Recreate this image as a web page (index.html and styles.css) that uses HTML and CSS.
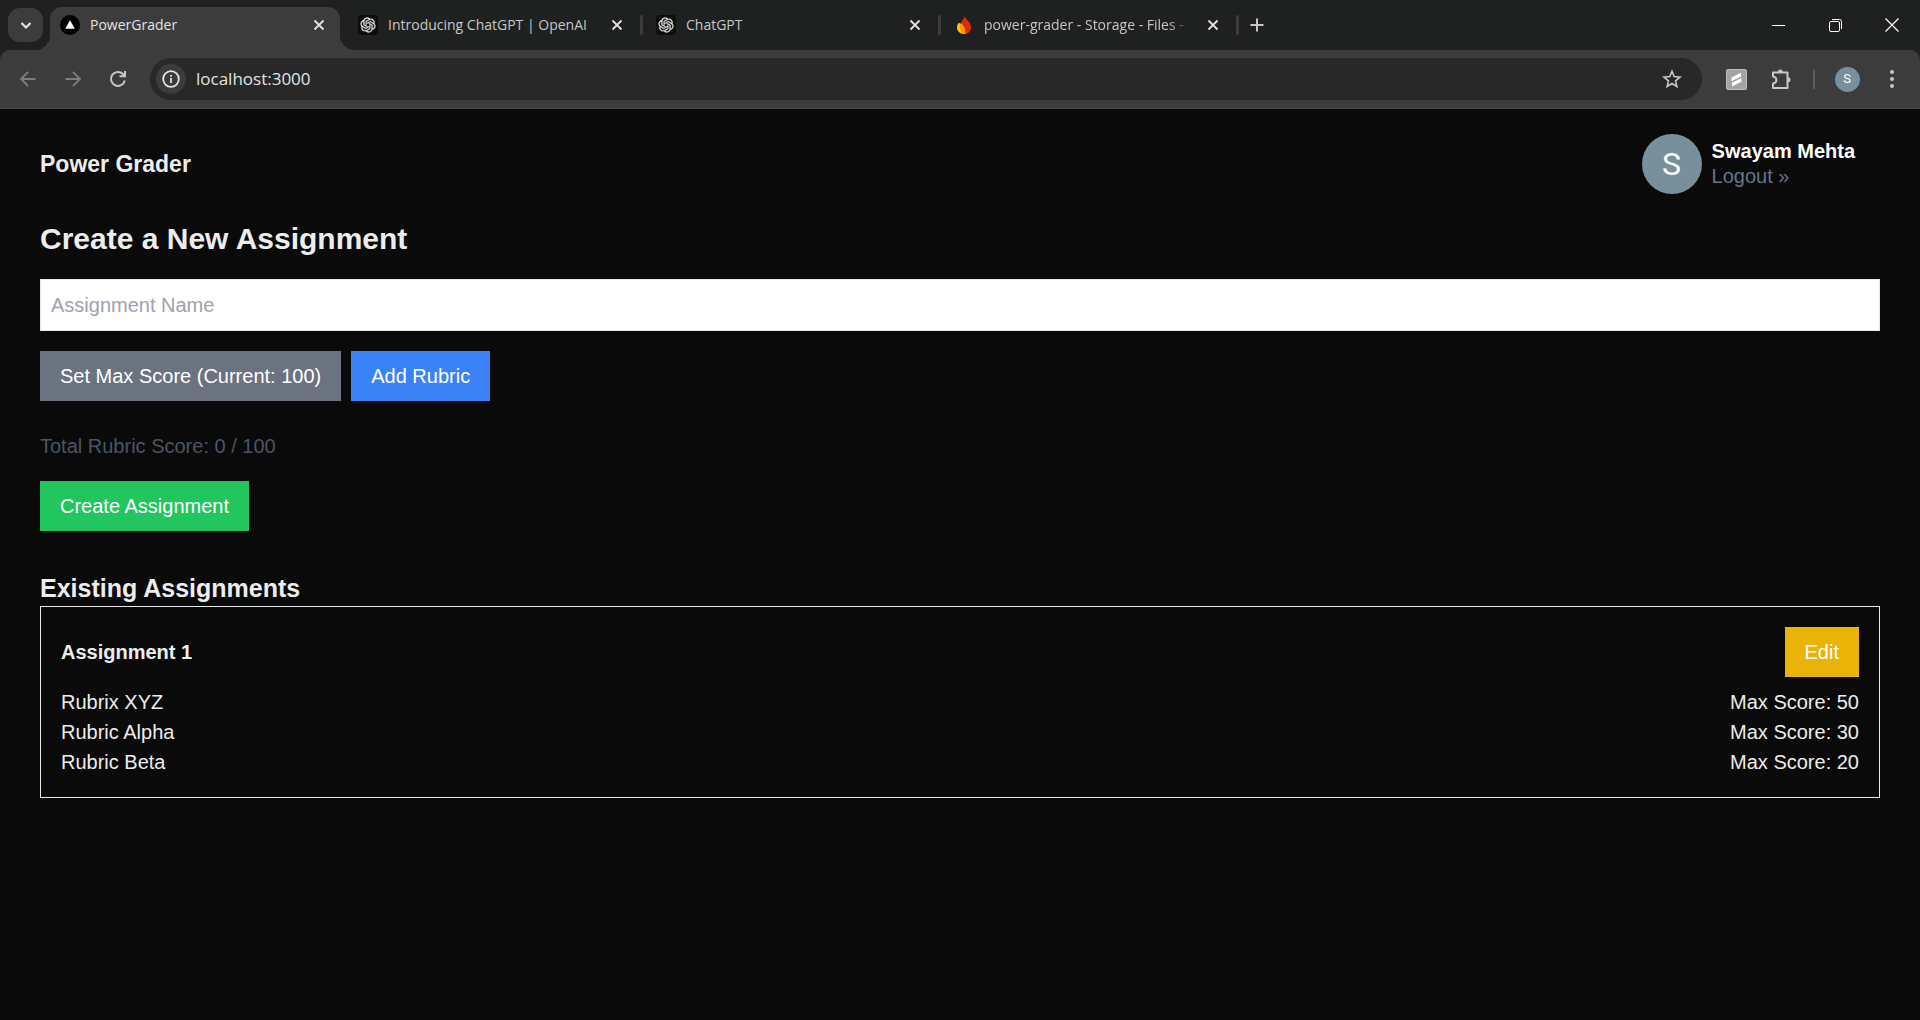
FILE: index.html
```html
<!DOCTYPE html>
<html lang="en">
<head>
    <meta charset="UTF-8">
    <meta name="viewport" content="width=device-width, initial-scale=1.0">
    <title>PowerGrader</title>
    <link rel="stylesheet" href="styles.css">
</head>
<body>
    <!-- Shared icons -->
    <svg class="icon-defs" aria-hidden="true">
        <symbol id="icon-close" viewBox="0 0 20 20">
            <path d="M5.5 5.5l9 9M14.5 5.5l-9 9" fill="none" stroke="currentColor" stroke-width="1.800"/>
        </symbol>
        <symbol id="icon-openai" viewBox="0 0 32 32">
            <rect width="32" height="32" rx="6" fill="#0c0c0c"/>
            <path transform="translate(4 4)" fill="#e8e8e8" stroke="#e8e8e8" stroke-width=".5" d="M22.2819 9.8211a5.9847 5.9847 0 0 0-.5157-4.9108 6.0462 6.0462 0 0 0-6.5098-2.9A6.0651 6.0651 0 0 0 4.9807 4.1818a5.9847 5.9847 0 0 0-3.9977 2.9 6.0462 6.0462 0 0 0 .7427 7.0966 5.98 5.98 0 0 0 .511 4.9107 6.051 6.051 0 0 0 6.5146 2.9001A5.9847 5.9847 0 0 0 13.2599 24a6.0557 6.0557 0 0 0 5.7718-4.2058 5.9894 5.9894 0 0 0 3.9977-2.9001 6.0557 6.0557 0 0 0-.7475-7.0729zm-9.022 12.6081a4.4755 4.4755 0 0 1-2.8764-1.0408l.1419-.0804 4.7783-2.7582a.7948.7948 0 0 0 .3927-.6813v-6.7369l2.02 1.1686a.071.071 0 0 1 .038.052v5.5826a4.504 4.504 0 0 1-4.4945 4.4944zm-9.6607-4.1254a4.4708 4.4708 0 0 1-.5346-3.0137l.142.0852 4.783 2.7582a.7712.7712 0 0 0 .7806 0l5.8428-3.3685v2.3324a.0804.0804 0 0 1-.0332.0615L9.74 19.9502a4.4992 4.4992 0 0 1-6.1408-1.6464zM2.3408 7.8956a4.485 4.485 0 0 1 2.3655-1.9728V11.6a.7664.7664 0 0 0 .3879.6765l5.8144 3.3543-2.0201 1.1685a.0757.0757 0 0 1-.071 0l-4.8303-2.7865A4.504 4.504 0 0 1 2.3408 7.872zm16.5963 3.8558L13.1038 8.364 15.1192 7.2a.0757.0757 0 0 1 .071 0l4.8303 2.7913a4.4944 4.4944 0 0 1-.6765 8.1042v-5.6772a.79.79 0 0 0-.407-.667zm2.0107-3.0231l-.142-.0852-4.7735-2.7818a.7759.7759 0 0 0-.7854 0L9.409 9.2297V6.8974a.0662.0662 0 0 1 .0284-.0615l4.8303-2.7866a4.4992 4.4992 0 0 1 6.6802 4.66zM8.3065 12.863l-2.02-1.1638a.0804.0804 0 0 1-.038-.0567V6.0742a4.4992 4.4992 0 0 1 7.3757-3.4537l-.142.0805L8.704 5.459a.7948.7948 0 0 0-.3927.6813zm1.0976-2.3654l2.602-1.4998 2.6069 1.4998v2.9994l-2.5974 1.4997-2.6067-1.4997Z"/>
        </symbol>
    </svg>

    <div class="browser">
        <div class="tab-strip">
            <button class="tab-search" aria-label="Search tabs">
                <svg width="20" height="20" viewBox="0 0 20 20"><path d="M5.5 8l4.500 4.500L14.500 8" fill="none" stroke="#e3e3e3" stroke-width="2.200"/></svg>
            </button>

            <div class="tab active">
                <button class="tab-label">
                    <svg width="20" height="20" viewBox="0 0 20 20"><circle cx="10" cy="10" r="10" fill="#000"/><path d="M10 5.200l4.800 8.600H5.200z" fill="#fff"/></svg>
                    <span class="tab-title">PowerGrader</span>
                </button>
                <button class="tab-close" aria-label="Close tab"><svg width="20" height="20"><use href="#icon-close"/></svg></button>
            </div>
            <span class="tab-divider hidden"></span>

            <div class="tab">
                <button class="tab-label">
                    <svg width="20" height="20"><use href="#icon-openai"/></svg>
                    <span class="tab-title">Introducing ChatGPT | OpenAI</span>
                </button>
                <button class="tab-close" aria-label="Close tab"><svg width="20" height="20"><use href="#icon-close"/></svg></button>
            </div>
            <span class="tab-divider"></span>

            <div class="tab">
                <button class="tab-label">
                    <svg width="20" height="20"><use href="#icon-openai"/></svg>
                    <span class="tab-title">ChatGPT</span>
                </button>
                <button class="tab-close" aria-label="Close tab"><svg width="20" height="20"><use href="#icon-close"/></svg></button>
            </div>
            <span class="tab-divider"></span>

            <div class="tab">
                <button class="tab-label">
                    <svg width="20" height="20" viewBox="0 0 20 20">
                        <path d="M10.500 1.500C12 4.500 17 7.500 17 12.500c0 4-3 6.500-6.500 6.500C7 18.500 5.500 15 6 11c.4-3.800 3-5.500 4.500-9.500z" fill="#dd2c00"/>
                        <path d="M4.500 8c3.500.3 7 3.200 6.800 10.800-4 .6-8.300-1.600-8.300-6.300 0-1.800.6-3.200 1.500-4.500z" fill="#ffc400"/>
                        <path d="M6.200 9c3 1.500 5.300 4.800 5.100 9.800C7.500 18.400 5.200 14.500 6.200 9z" fill="#ff9100"/>
                    </svg>
                    <span class="tab-title faded">power-grader - Storage - Files -</span>
                </button>
                <button class="tab-close" aria-label="Close tab"><svg width="20" height="20"><use href="#icon-close"/></svg></button>
            </div>
            <span class="tab-divider"></span>

            <button class="new-tab" aria-label="New tab">
                <svg width="20" height="20" viewBox="0 0 20 20"><path d="M10 3.500v13M3.500 10h13" fill="none" stroke="currentColor" stroke-width="2"/></svg>
            </button>

            <div class="window-controls">
                <button aria-label="Minimize"><svg width="14" height="14" viewBox="0 0 14 14"><path d="M1 7.500h13" stroke="#fff"/></svg></button>
                <button aria-label="Restore"><svg width="14" height="14" viewBox="0 0 14 14" fill="none" stroke="#fff"><rect x="1.500" y="3.500" width="10" height="10" rx="1.500"/><path d="M4 1.500h7.500a2 2 0 0 1 2 2V11"/></svg></button>
                <button aria-label="Close"><svg width="14" height="14" viewBox="0 0 14 14"><path d="M.5.5l13 13M13.500.5l-13 13" stroke="#fff" stroke-width="1.200"/></svg></button>
            </div>
        </div>

        <div class="toolbar">
            <button class="tool dim" aria-label="Back">
                <svg width="20" height="20" viewBox="0 0 20 20"><path d="M17.500 10H3.500M10 3L3 10l7 7" fill="none" stroke="currentColor" stroke-width="1.800"/></svg>
            </button>
            <button class="tool dim" aria-label="Forward">
                <svg width="20" height="20" viewBox="0 0 20 20"><path d="M2.500 10h14M10 3l7 7-7 7" fill="none" stroke="currentColor" stroke-width="1.800"/></svg>
            </button>
            <button class="tool" aria-label="Reload">
                <svg width="20" height="20" viewBox="0 0 20 20"><path d="M16.800 11.500A7 7 0 1 1 15 5l1.800 1.800M17 2v5.200h-5.500" fill="none" stroke="currentColor" stroke-width="2"/></svg>
            </button>

            <div class="address-bar">
                <button class="site-info" aria-label="View site information">
                    <svg width="18" height="18" viewBox="0 0 18 18"><circle cx="9" cy="9" r="7.800" fill="none" stroke="#e3e3e3" stroke-width="1.800"/><path d="M9 8v5M9 5v1.800" stroke="#e3e3e3" stroke-width="1.800"/></svg>
                </button>
                <input type="text" value="localhost:3000" aria-label="Address">
                <button class="bookmark" aria-label="Bookmark this tab">
                    <svg width="20" height="20" viewBox="0 0 20 20"><path d="M10 2.300l2.200 5.300 5.800.5-4.400 3.800 1.300 5.600-4.900-3-4.900 3 1.300-5.600L2 8.100l5.800-.5z" fill="none" stroke="currentColor" stroke-width="1.600"/></svg>
                </button>
            </div>

            <button class="tool" aria-label="Extension">
                <svg width="21" height="21" viewBox="0 0 21 21"><rect x=".5" y=".5" width="20" height="20" rx="1.500" fill="#a3a3a3" stroke="#bdbdbd"/><path d="M5.500 8.500l9.500-4.700v3.700l-9.500 4.700zM6 13.700l9.500-4.700v3.700L6 17.400z" fill="#fff"/></svg>
            </button>
            <button class="tool" aria-label="Extensions">
                <svg width="22" height="22" viewBox="0 0 22 22"><path d="M3 4.500h14.500v15.500H3v-4.500c4.500-.7 4.500-6.300 0-7z" fill="none" stroke="currentColor" stroke-width="2" stroke-linejoin="round"/><path d="M7.800 4a2.500 2.500 0 0 1 5 0zM18 9.300a2.500 2.500 0 0 1 0 5z" fill="currentColor"/></svg>
            </button>
            <span class="tool-divider"></span>
            <button class="tool" aria-label="Profile"><span class="avatar small">S</span></button>
            <button class="tool" aria-label="Menu">
                <svg width="20" height="20" viewBox="0 0 20 20" fill="currentColor"><circle cx="10" cy="3" r="2"/><circle cx="10" cy="10" r="2"/><circle cx="10" cy="17" r="2"/></svg>
            </button>
        </div>
    </div>

    <header class="site-header">
        <h1>Power Grader</h1>
        <div class="user">
            <span class="avatar">S</span>
            <div class="user-info">
                <p class="user-name">Swayam Mehta</p>
                <a href="#">Logout »</a>
            </div>
        </div>
    </header>

    <main>
        <form class="create-form">
            <h2>Create a New Assignment</h2>
            <input class="name-input" type="text" placeholder="Assignment Name" aria-label="Assignment Name">
            <div class="button-row">
                <button type="button" class="btn btn-gray">Set Max Score (Current: 100)</button>
                <button type="button" class="btn btn-blue">Add Rubric</button>
            </div>
            <p class="total">Total Rubric Score: 0 / 100</p>
            <button type="button" class="btn btn-green">Create Assignment</button>
        </form>

        <section>
            <h3>Existing Assignments</h3>
            <div class="assignment">
                <div class="assignment-header">
                    <h4>Assignment 1</h4>
                    <button type="button" class="btn btn-yellow">Edit</button>
                </div>
                <ul class="rubrics">
                    <li><span>Rubrix XYZ</span><span>Max Score: 50</span></li>
                    <li><span>Rubric Alpha</span><span>Max Score: 30</span></li>
                    <li><span>Rubric Beta</span><span>Max Score: 20</span></li>
                </ul>
            </div>
        </section>
    </main>
</body>
</html>
```
FILE: styles.css
```css
* {
    box-sizing: border-box;
}

body {
    margin: 0;
    background: #0a0a0a;
    color: #ededed;
    font-family: "Liberation Sans", Arial, Helvetica, sans-serif;
    font-size: 20px;
    line-height: 30px;
}

h1, h2, h3, h4, p, ul {
    margin: 0;
    padding: 0;
}

button, input {
    margin: 0;
    padding: 0;
    border: none;
    background: none;
    color: inherit;
    font: inherit;
}

button {
    cursor: pointer;
}

svg {
    display: block;
    flex: none;
}

.icon-defs {
    position: absolute;
    width: 0;
    height: 0;
}

/* Browser window */
.browser {
    background: #1f2120;
    color: #c7c7c7;
    font-family: "Open Sans", "Segoe UI", sans-serif;
    font-size: 14px;
    line-height: 20px;
}

.tab-strip {
    display: flex;
    align-items: center;
    height: 50px;
    padding-left: 8px;
}

.tab-search {
    display: flex;
    align-items: center;
    justify-content: center;
    width: 35px;
    height: 34px;
    margin-right: 7px;
    border-radius: 12px;
    background: #3c3c3c;
}

.tab {
    display: flex;
    align-items: center;
    flex: 0 1 290px;
    align-self: flex-end;
    min-width: 0;
    height: 43px;
    padding: 0 10px 7px;
}

.tab.active {
    position: relative;
    background: #3c3c3c;
    border-radius: 12px 12px 0 0;
    color: #e3e3e3;
}

/* Curved feet of the active tab */
.tab.active::before,
.tab.active::after {
    content: "";
    position: absolute;
    bottom: 0;
    width: 15px;
    height: 15px;
}

.tab.active::before {
    right: 100%;
    background: radial-gradient(circle at 0 0, transparent 15px, #3c3c3c 15px);
}

.tab.active::after {
    left: 100%;
    background: radial-gradient(circle at 100% 0, transparent 15px, #3c3c3c 15px);
}

.tab-label {
    display: flex;
    align-items: center;
    gap: 10px;
    flex: 1;
    min-width: 0;
    text-align: left;
}

.tab-title {
    flex: 1;
    overflow: hidden;
    white-space: nowrap;
    margin-right: 10px;
}

.tab-title.faded {
    -webkit-mask-image: linear-gradient(to left, transparent, #000 24px);
    mask-image: linear-gradient(to left, transparent, #000 24px);
}

.tab-close {
    display: flex;
    justify-content: center;
    width: 22px;
    color: #e3e3e3;
}

.tab-divider {
    width: 3px;
    height: 20px;
    margin: 0 3px 0 2px;
    border-radius: 2px;
    background: #3c3c3c;
}

.tab-divider.hidden {
    visibility: hidden;
}

.new-tab {
    display: flex;
    justify-content: center;
    width: 30px;
}

.window-controls {
    display: flex;
    align-self: stretch;
    margin-left: auto;
}

.window-controls button {
    display: flex;
    align-items: center;
    justify-content: center;
    width: 57px;
}

.toolbar {
    display: flex;
    align-items: center;
    gap: 5px;
    padding: 8px;
    border-bottom: 1px solid #4a4a4a;
    border-radius: 10px 10px 0 0;
    background: #3c3c3c;
}

.tool {
    display: flex;
    align-items: center;
    justify-content: center;
    width: 40px;
    height: 42px;
}

.tool.dim {
    color: #7d7d7d;
}

.tool-divider {
    width: 2px;
    height: 20px;
    margin: 0 7px;
    background: #5c5c5c;
}

.address-bar {
    display: flex;
    align-items: center;
    flex: 1;
    height: 42px;
    margin: 0 9px 0 7px;
    padding: 0 20px 0 6px;
    border-radius: 21px;
    background: #282828;
}

.address-bar input {
    flex: 1;
    min-width: 0;
    margin-left: 10px;
    outline: none;
    color: #e3e3e3;
    font-size: 17px;
}

.site-info {
    display: flex;
    align-items: center;
    justify-content: center;
    width: 30px;
    height: 30px;
    border-radius: 50%;
    background: #3c3c3c;
}

.avatar {
    display: flex;
    align-items: center;
    justify-content: center;
    width: 60px;
    height: 60px;
    border-radius: 50%;
    background: #78909c;
    color: #fff;
    font-family: Roboto, sans-serif;
    font-size: 32px;
}

.avatar.small {
    width: 25px;
    height: 25px;
    font-size: 13px;
}

/* Page */
.site-header {
    display: flex;
    align-items: center;
    justify-content: space-between;
    padding: 25px 65px 25px 40px;
}

h1 {
    font-size: 23px;
}

.user {
    display: flex;
    align-items: center;
    gap: 10px;
}

.user-info {
    line-height: 25px;
}

.user-name {
    color: #fff;
    font-weight: bold;
}

.user-info a {
    display: block;
    color: #64748b;
    text-decoration: none;
}

main {
    padding: 0 40px 40px;
}

.create-form {
    margin-bottom: 40px;
}

h2 {
    margin-bottom: 20px;
    font-size: 30px;
    line-height: 40px;
}

.name-input {
    display: block;
    width: 100%;
    margin-bottom: 20px;
    padding: 10px;
    border: 1px solid #e5e7eb;
    background: #fff;
    color: #000;
    line-height: 30px;
}

.name-input::placeholder {
    color: #9ca3af;
    opacity: 1;
}

.button-row {
    display: flex;
    gap: 10px;
    margin-bottom: 30px;
}

.btn {
    padding: 10px 20px;
    color: #fff;
}

.btn-gray {
    background: #6b7280;
}

.btn-blue {
    background: #3b82f6;
}

.btn-green {
    display: block;
    background: #22c55e;
}

.btn-yellow {
    background: #eab308;
}

.total {
    margin-bottom: 20px;
    color: #4b5563;
}

h3 {
    font-size: 25px;
    line-height: 35px;
}

.assignment {
    padding: 20px;
    border: 1px solid #e5e7eb;
}

.assignment-header {
    display: flex;
    align-items: center;
    justify-content: space-between;
    margin-bottom: 10px;
}

h4 {
    font-size: 20px;
}

.rubrics {
    list-style: none;
}

.rubrics li {
    display: flex;
    justify-content: space-between;
}
```
